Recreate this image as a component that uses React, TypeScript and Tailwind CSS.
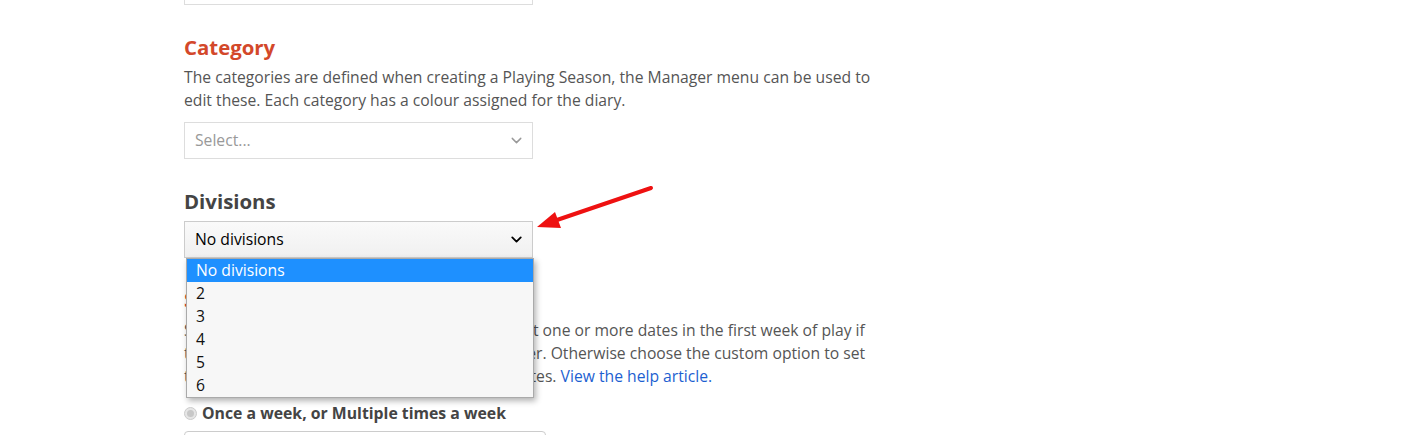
import { ChevronDown } from "lucide-react";

const options = ["No divisions", "2", "3", "4", "5", "6"];

export default function App() {
  return (
    <div
      className="relative w-[1407px] h-[435px] overflow-hidden bg-white text-[15.7px] leading-[23px] text-[#555]"
      style={{ fontFamily: '"Open Sans", "Liberation Sans", sans-serif' }}
    >
      <div className="pl-[184px] w-[900px]">
        <div className="w-[349px] h-[5px] border-x border-b border-[#ddd]" />

        <h2 className="mt-[28px] text-[20.4px] leading-[28px] font-bold text-[#d3482a]">Category</h2>
        <p className="mt-[5px] w-[700px]">
          The categories are defined when creating a Playing Season, the Manager menu can be used to
          <br />
          edit these. Each category has a colour assigned for the diary.
        </p>
        <div className="mt-[10px] w-[349px] h-[37px] border border-[#ddd] bg-white flex items-center justify-between pl-[10px] pr-[7px] text-[#999]">
          <span>Select...</span>
          <ChevronDown className="w-[17px] h-[17px] text-[#999]" strokeWidth={2} />
        </div>

        <h2 className="mt-[28px] text-[20.4px] leading-[28px] font-bold text-[#444]">Divisions</h2>
        <div className="relative mt-[6px] w-[349px]">
          <div className="h-[37px] border border-[#ccc] bg-gradient-to-b from-[#fafafa] to-[#f0f0f0] flex items-center justify-between pl-[10px] pr-[7px] text-black">
            <span>No divisions</span>
            <ChevronDown className="w-[17px] h-[17px] text-black" strokeWidth={2.6} />
          </div>
          <ul className="absolute z-10 left-[2px] top-[37px] w-[348px] bg-[#f7f7f7] border border-[#aaa] shadow-[2px_3px_6px_rgba(0,0,0,0.3)] text-[#111]">
            {options.map((o, i) => (
              <li
                key={o}
                className={
                  i === 0
                    ? "h-[23px] pl-[9px] bg-[#1e90ff] text-white"
                    : "h-[23px] pl-[9px]"
                }
              >
                {o}
              </li>
            ))}
          </ul>
        </div>

        <h2 className="mt-[27px] text-[20.4px] leading-[28px] font-bold text-[#d3482a]">Schedule</h2>
        <p className="mt-[6px] w-[720px] whitespace-nowrap">
          Select the weekday(s) of games, or select at least one or more dates in the first week of play if
          <br />
          the games are played on a regular basis, or other. Otherwise choose the custom option to set
          <br />
          the schedule for the season with the specific dates.{" "}
          <span className="text-[#1d5fd1]">View the help article.</span>
        </p>

        <label className="mt-[14px] flex items-center gap-[5px] text-[15.8px] font-bold text-[#444]">
          <span className="w-[13px] h-[13px] rounded-full border border-[#ccc] bg-[#e6e6e6] flex items-center justify-center">
            <span className="w-[7px] h-[7px] rounded-full bg-[#c8c8c8]" />
          </span>
          Once a week, or Multiple times a week
        </label>
        <div className="mt-[6px] w-[362px] h-[37px] border border-[#ccc] rounded-[4px]" />
      </div>

      <svg className="absolute left-[530px] top-[180px]" width="130" height="55" viewBox="0 0 130 55">
        <line x1="121" y1="8" x2="24" y2="41" stroke="#ee1111" strokeWidth="4" strokeLinecap="round" />
        <polygon points="7,47 25,32 31,48" fill="#ee1111" />
      </svg>
    </div>
  );
}
